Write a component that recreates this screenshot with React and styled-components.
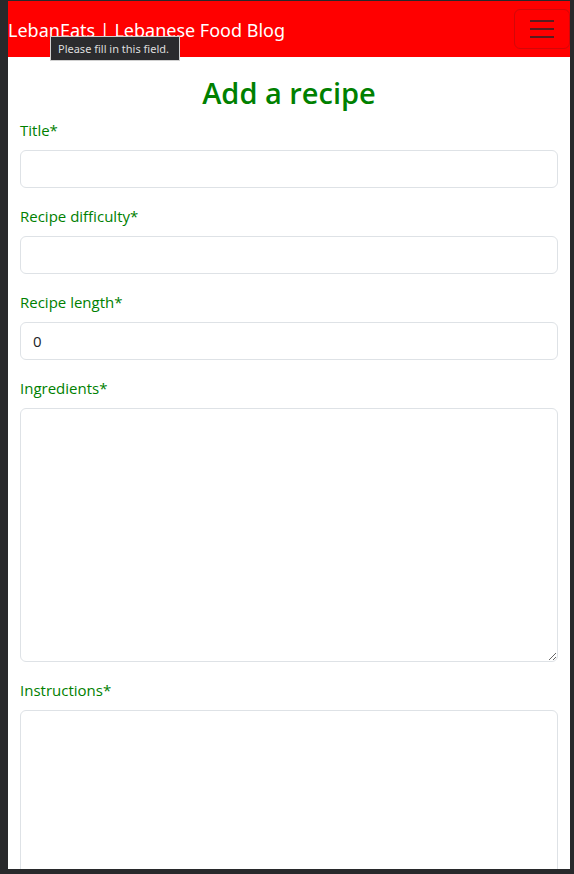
import React from "react";
import styled, { createGlobalStyle } from "styled-components";

const GlobalStyle = createGlobalStyle`
  *, *::before, *::after { box-sizing: border-box; }
  body {
    margin: 0;
    background: #28292b;
    color: #212529;
    font-family: "Segoe UI", "Open Sans", "Noto Sans", sans-serif;
    font-size: 15px;
    line-height: 24px;
  }
`;

const Frame = styled.div`
  display: flex;
  height: 100vh;
  padding: 1px 4px 5px 8px;
  background: #28292b;
`;

const Page = styled.div`
  position: relative;
  flex: 1;
  min-width: 0;
  overflow: hidden;
  background: #fff;
`;

const Navbar = styled.nav`
  display: flex;
  align-items: center;
  justify-content: space-between;
  padding: 8px 0;
  background: #f00;
`;

const Brand = styled.a`
  padding-top: 2px;
  color: #fff;
  font-family: "Segoe UI", "Noto Sans", "Open Sans", sans-serif;
  font-size: 18px;
  line-height: 30px;
  text-decoration: none;
  white-space: nowrap;
`;

const Toggler = styled.button`
  display: flex;
  padding: 4px 12px;
  border: 1px solid rgba(33, 37, 41, 0.2);
  border-radius: 6px;
  background: transparent;
  cursor: pointer;
`;

const Tooltip = styled.div`
  position: absolute;
  top: 35px;
  left: 42px;
  padding: 3px 10px 3px 7px;
  border: 1px solid #d0d0d0;
  background: #2b2b2e;
  color: #dedede;
  font-family: "Segoe UI", "Noto Sans", "Open Sans", sans-serif;
  font-size: 11px;
  line-height: 17px;
  white-space: nowrap;
`;

const Main = styled.main`
  padding: 18px 12px;
`;

const Heading = styled.h1`
  margin: 0 0 8px;
  color: #008000;
  font-size: 29px;
  font-weight: 600;
  line-height: 35px;
  text-align: center;
`;

const Field = styled.div`
  margin-bottom: 16px;
`;

const Label = styled.label`
  display: block;
  margin-bottom: 8px;
  color: #008000;
`;

const Control = styled.input`
  display: block;
  width: 100%;
  padding: 6px 12px;
  border: 1px solid #dee2e6;
  border-radius: 6px;
  background: #fff;
  color: #212529;
  font: inherit;
  appearance: none;
  -moz-appearance: textfield;
  resize: vertical;

  &:focus {
    outline: none;
    border-color: #86b7fe;
  }
`;

const fields = [
  { id: "title", label: "Title" },
  { id: "difficulty", label: "Recipe difficulty" },
  { id: "length", label: "Recipe length", value: "0", type: "number" },
  { id: "ingredients", label: "Ingredients", rows: 10 },
  { id: "instructions", label: "Instructions", rows: 10 },
];

function FormField({ id, label, value = "", type = "text", rows }) {
  const kind = rows ? { as: "textarea", rows } : { type };
  return (
    <Field>
      <Label htmlFor={id}>{label}*</Label>
      <Control id={id} name={id} defaultValue={value} required {...kind} />
    </Field>
  );
}

export default function App() {
  return (
    <>
      <GlobalStyle />
      <Frame>
        <Page>
          <Navbar>
            <Brand href="#">LebanEats | Lebanese Food Blog</Brand>
            <Toggler type="button" aria-label="Toggle navigation">
              <svg width="30" height="30" viewBox="0 0 30 30" aria-hidden="true">
                <path
                  d="M3 7h24M3 15h24M3 23h24"
                  stroke="rgba(33, 37, 41, 0.75)"
                  strokeWidth="2"
                />
              </svg>
            </Toggler>
          </Navbar>
          <Main>
            <Heading>Add a recipe</Heading>
            <form noValidate>
              {fields.map((field) => (
                <FormField key={field.id} {...field} />
              ))}
            </form>
          </Main>
          <Tooltip role="tooltip">Please fill in this field.</Tooltip>
        </Page>
      </Frame>
    </>
  );
}
